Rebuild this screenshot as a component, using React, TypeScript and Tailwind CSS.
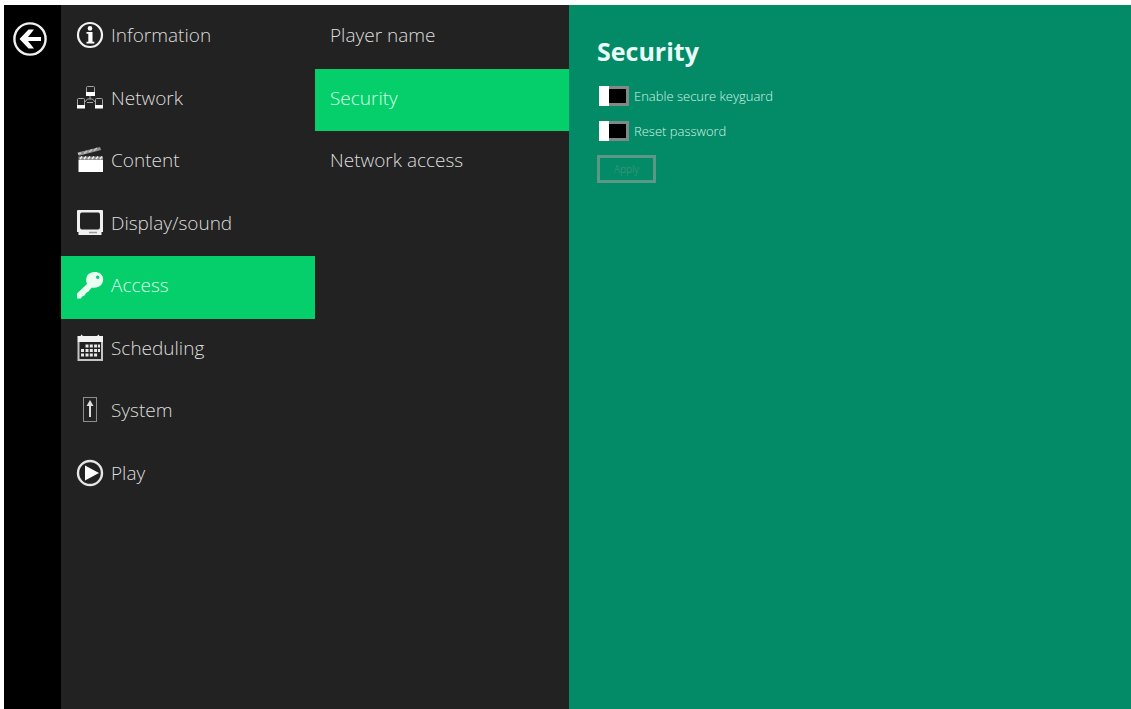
import React, { useState } from 'react';

const InfoIcon = () => (
  <svg viewBox="0 0 28 28" className="h-7 w-7" aria-hidden="true">
    <circle cx="14" cy="14" r="12" fill="none" stroke="#f2f2f2" strokeWidth="2.2" />
    <circle cx="14" cy="7.4" r="2.3" fill="#fff" />
    <path d="M10.5 11h6v9.8h1.8v1.7h-7.8v-1.7h1.8v-8h-1.8z" fill="#fff" />
  </svg>
);

const NetworkIcon = () => (
  <svg viewBox="0 0 28 28" className="h-7 w-7" aria-hidden="true">
    <g fill="none" stroke="#a5a5a5" strokeWidth="1">
      <rect x="10.5" y="2.5" width="8" height="9" rx="1" />
      <rect x="1.5" y="14.5" width="7" height="9" rx="1" />
      <rect x="19.5" y="14.5" width="7" height="9" rx="1" />
      <path d="M14 12v3M8.5 18.5l3-3.5h5l3 3.5M11 18.5h6" />
    </g>
    <path d="M10 8h9v4h-9zM1 21h8v3.500H1zM19 21h8v3.500h-8z" fill="#fff" />
  </svg>
);

const ContentIcon = () => (
  <svg viewBox="0 0 28 28" className="h-7 w-7" aria-hidden="true">
    <path d="M2.5 14H27v12H2.5z" fill="#fff" />
    <path d="M2.5 10.5H27V14H2.5z" fill="#8c8c8c" />
    <path d="M4 13l2-2.5M8 13l2-2.5M12 13l2-2.5M16 13l2-2.5M20 13l2-2.5M24 13l2-2.5" stroke="#eee" strokeWidth="1.5" />
    <path d="M1.5 6.5L24 1l1.2 3L3 9.8z" fill="#8f8f8f" />
    <path d="M2 8l3-1M8 7.5l3-2.5M13 6l3-2.5M18 4.5l3-2.5" stroke="#c8c8c8" strokeWidth="1.5" />
  </svg>
);

const DisplayIcon = () => (
  <svg viewBox="0 0 28 28" className="h-7 w-7" aria-hidden="true">
    <path
      d="M2 1h24q1 0 1 1v21h-1.500v3h-23v-3H1V2q0-1 1-1zM5.500 3.500Q4 3.500 4 6v12q0 2.500 2 2.500h16q2 0 2-2.500V6q0-2.500-1.500-2.500z"
      fill="#f0f0f0"
      fillRule="evenodd"
    />
    <path d="M13 23.5h8" stroke="#999" strokeWidth="1.5" />
  </svg>
);

const KeyIcon = () => (
  <svg viewBox="0 0 28 28" className="h-7 w-7" aria-hidden="true">
    <path
      d="M12 3.500C15 .500 21 0 24.500 2.800c3.500 3 3.500 8 .5 11.200-2.500 2.500-6 3.200-9 2.500l-2 2-1.500 2-2.500 1.500-1.500 2.500-2.500 1L5 27.500H1v-5L11 13c-1.500-3-1-7 1-9.500zM20 6.200a1.700 1.700 0 1 0 3.400 0 1.700 1.700 0 1 0-3.400 0z"
      fill="#eafff2"
      fillRule="evenodd"
    />
  </svg>
);

const CalendarIcon = () => (
  <svg viewBox="0 0 28 28" className="h-7 w-7" aria-hidden="true">
    <path d="M1.5 2h3l1-1.5L7 2h14l1.5-1.5 1 1.5H27v6H1.5z" fill="#f2f2f2" />
    <path d="M2.5 8v18H26V8" fill="none" stroke="#c4c4c4" strokeWidth="2" />
    <g fill="#e8e8e8">
      <path d="M9.5 10.5h3v3h-3zM13.8 10.5h3v3h-3zM18.1 10.5h3v3h-3zM22 10.5h2v3h-2z" />
      <path d="M5 15h3v3H5zM9.5 15h3v3h-3zM13.8 15h3v3h-3zM18.1 15h3v3h-3zM22 15h2v3h-2z" />
      <path d="M5 19.5h3v3H5zM9.5 19.5h3v3h-3zM13.8 19.5h3v3h-3zM18.1 19.5h3v3h-3z" />
    </g>
  </svg>
);

const SystemIcon = () => (
  <svg viewBox="0 0 28 28" className="h-7 w-7" aria-hidden="true">
    <rect x="7.5" y="1.5" width="13" height="24" fill="none" stroke="#8e8e8e" />
    <path d="M14 4l3.5 6H15v11h-2V10h-2.500z" fill="#ddd" />
  </svg>
);

const PlayIcon = () => (
  <svg viewBox="0 0 28 28" className="h-7 w-7" aria-hidden="true">
    <circle cx="14" cy="14" r="12" fill="none" stroke="#e6e6e6" strokeWidth="2.4" />
    <path d="M9 6.5L23 14 9 21.5z" fill="#fff" />
  </svg>
);

const BackIcon = () => (
  <svg viewBox="0 0 36 36" className="h-9 w-9" aria-hidden="true">
    <circle cx="18" cy="18" r="15.6" fill="none" stroke="#f0f0f0" strokeWidth="2.4" />
    <path d="M7.500 18l9-9.500H22L16 16h13v4H16l6 7.500h-5.500z" fill="#fff" />
  </svg>
);

const menuItems = [
  { label: 'Information', icon: InfoIcon },
  { label: 'Network', icon: NetworkIcon },
  { label: 'Content', icon: ContentIcon },
  { label: 'Display/sound', icon: DisplayIcon },
  { label: 'Access', icon: KeyIcon },
  { label: 'Scheduling', icon: CalendarIcon },
  { label: 'System', icon: SystemIcon },
  { label: 'Play', icon: PlayIcon },
];

const subItems = ['Player name', 'Security', 'Network access'];

interface ToggleProps {
  id: string;
  label: string;
  checked: boolean;
  onChange: (checked: boolean) => void;
}

const Toggle: React.FC<ToggleProps> = ({ id, label, checked, onChange }) => (
  <div className="flex items-center gap-[5px]">
    <input
      id={id}
      type="checkbox"
      checked={checked}
      onChange={(e) => onChange(e.target.checked)}
      className="relative h-5 w-[30px] shrink-0 appearance-none border-3 border-[#7f8a86] bg-black before:absolute before:-inset-y-[3px] before:-left-[3px] before:w-2.5 before:bg-white checked:before:-right-[3px] checked:before:left-auto"
    />
    <label htmlFor={id} className="text-[13px] leading-5 font-light text-[#d2f5e6]">
      {label}
    </label>
  </div>
);

const App: React.FC = () => {
  const [section, setSection] = useState('Access');
  const [page, setPage] = useState('Security');
  const [keyguard, setKeyguard] = useState(false);
  const [reset, setReset] = useState(false);

  return (
    <div className="flex min-h-screen bg-white pt-[5px] pl-1 font-['Open_Sans',sans-serif]">
      <div className="flex flex-1">
        <aside className="w-[57px] shrink-0 bg-black pt-4 pl-2">
          <button type="button" aria-label="Back" className="block">
            <BackIcon />
          </button>
        </aside>

        <nav aria-label="Settings" className="w-[254px] shrink-0 bg-[#222222] pt-px">
          <div className="grid h-[500px] grid-rows-8">
            {menuItems.map(({ label, icon: Icon }) => (
              <button
                key={label}
                type="button"
                onClick={() => setSection(label)}
                className={`flex items-center gap-[7px] pb-1 pl-[15px] text-left text-[19px] font-light ${
                  section === label ? 'bg-[#04cf6a] text-[#dcffe9]' : 'text-[#dedede]'
                }`}
              >
                <Icon />
                {label}
              </button>
            ))}
          </div>
        </nav>

        <nav aria-label={section} className="w-[254px] shrink-0 bg-[#222222] pt-px">
          <div className="grid h-[500px] grid-rows-8">
            {subItems.map((label) => (
              <button
                key={label}
                type="button"
                onClick={() => setPage(label)}
                className={`flex items-center pb-1 pl-[15px] text-left text-[19px] font-light ${
                  page === label ? 'bg-[#04cf6a] text-[#dcffe9]' : 'text-[#dedede]'
                }`}
              >
                {label}
              </button>
            ))}
          </div>
        </nav>

        <main className="flex-1 bg-[#038a67] pt-7 pl-7">
          <h1 className="text-[25px] leading-9 font-bold text-[#eafff7]">Security</h1>
          <div className="mt-[17px] flex flex-col gap-[15px] pl-0.5">
            <Toggle id="keyguard" label="Enable secure keyguard" checked={keyguard} onChange={setKeyguard} />
            <Toggle id="reset-password" label="Reset password" checked={reset} onChange={setReset} />
          </div>
          <button
            type="button"
            disabled={!keyguard && !reset}
            className="mt-3.5 block h-7 w-[59px] border-3 border-[#5b9885] text-[10px] leading-5 font-light text-[#b5e5d3] disabled:text-[#4f9a82]"
          >
            Apply
          </button>
        </main>
      </div>
    </div>
  );
};

export default App;
